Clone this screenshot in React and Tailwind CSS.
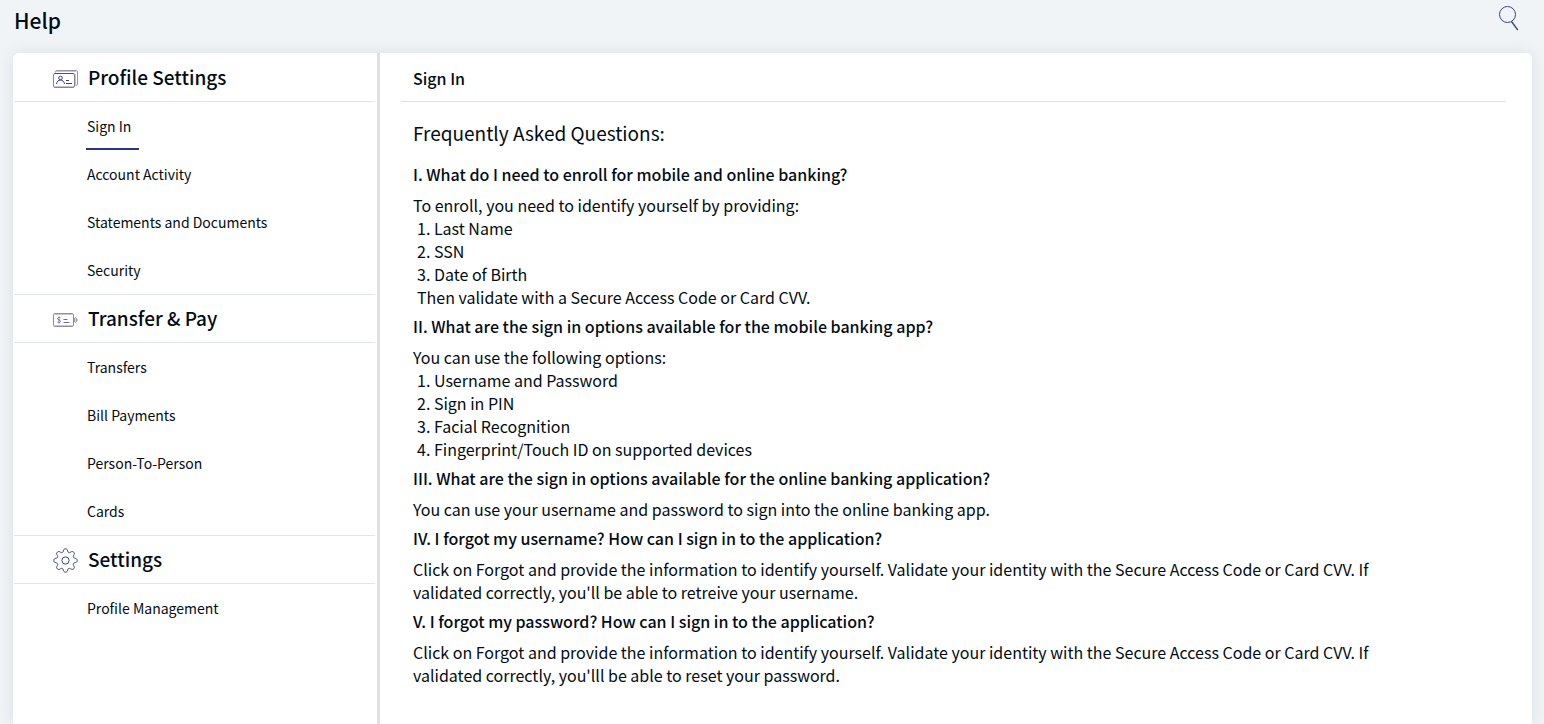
import clsx from 'clsx'

function ProfileIcon() {
  return (
    <svg width="25" height="18" viewBox="0 0 25 18" fill="none" aria-hidden="true">
      <path d="M2.500 2.500V2a1.500 1.500 0 0 1 1.500-1.500H23A1.500 1.500 0 0 1 24.500 2V14A1.500 1.500 0 0 1 23 15.500" stroke="#9897ad" />
      <path d="M3 1.500H23M1.500 16.500H21M22.500 4V16" stroke="#c6c5ce" />
      <rect x="0.500" y="3.500" width="21" height="14" rx="1.500" stroke="#8580a8" />
      <path d="M1.500 3.500H20.500" stroke="#4a4d86" />
      <circle cx="7.500" cy="8" r="1.800" stroke="#3b4480" />
      <path d="M3.500 14c.4-2.600 1.900-3.900 4-3.900s3.600 1.300 4 3.900" stroke="#3b4480" />
      <path d="M13 10.500h3M13 13.500h6" stroke="#3b4480" />
    </svg>
  )
}

function TransferIcon() {
  return (
    <svg width="25" height="14" viewBox="0 0 25 14" fill="none" aria-hidden="true">
      <rect x="0.500" y="0.500" width="20" height="13" rx="1.500" stroke="#8f8dab" />
      <path d="M1.500 1.500H20M1.500 12.500H20" stroke="#c6c5ce" />
      <path d="M7.500 4.800C6.500 4 4.500 4.300 4.500 5.600c0 1.600 3 1 3 2.700 0 1.400-2 1.700-3.100.8M6 3.500v7" stroke="#6d6f9c" strokeWidth="0.9" />
      <path d="M10.500 6.500h4M10.500 9.500h6" stroke="#6d6f9c" />
      <path d="M20.500 4.500l1.700 2.500-1.700 2.500M22.500 4.500L24.200 7l-1.700 2.500" stroke="#6d6f9c" />
    </svg>
  )
}

function GearIcon() {
  return (
    <svg width="25" height="25" viewBox="0 0 25 25" fill="none" stroke="#3b4480" aria-hidden="true">
      <circle cx="12.500" cy="12.500" r="3.600" />
      <path strokeLinejoin="round" d="M10.3 3.200C10.500 1.600 11.200.8 12.500.8s2 .8 2.200 2.400c.2 1.300 1.600 1.900 2.700 1.100 1.300-1 2.400-1 3.300-.1s.9 2-.1 3.300c-.8 1.100-.2 2.500 1.100 2.700 1.700.2 2.500 1 2.500 2.300s-.8 2.100-2.500 2.300c-1.300.2-1.900 1.600-1.100 2.700 1 1.300 1 2.400.1 3.300s-2 .9-3.300-.1c-1.100-.8-2.500-.2-2.700 1.100-.2 1.600-.9 2.400-2.200 2.400s-2-.8-2.200-2.400c-.2-1.300-1.600-1.900-2.700-1.100-1.300 1-2.400 1-3.300.1s-.9-2 .1-3.300c.8-1.100.2-2.500-1.100-2.700-1.700-.2-2.500-1-2.500-2.300s.8-2.100 2.500-2.300c1.300-.2 1.900-1.600 1.100-2.700-1-1.300-1-2.400-.1-3.300s2-.9 3.300.1c1.100.8 2.500.2 2.700-1.100Z" />
    </svg>
  )
}

function SearchIcon() {
  return (
    <svg width="20" height="26" viewBox="0 0 20 26" fill="none" stroke="#3b4480" aria-hidden="true">
      <circle cx="8.500" cy="8.500" r="8" />
      <path d="M12.500 15.500L18.800 24" strokeWidth="1.300" />
    </svg>
  )
}

const MENU = [
  { title: 'Profile Settings', icon: ProfileIcon, items: ['Sign In', 'Account Activity', 'Statements and Documents', 'Security'] },
  { title: 'Transfer & Pay', icon: TransferIcon, items: ['Transfers', 'Bill Payments', 'Person-To-Person', 'Cards'] },
  { title: 'Settings', icon: GearIcon, items: ['Profile Management'] },
]

const FAQ = [
  {
    q: 'I. What do I need to enroll for mobile and online banking?',
    a: 'To enroll, you need to identify yourself by providing:',
    list: ['1. Last Name', '2. SSN', '3. Date of Birth', 'Then validate with a Secure Access Code or Card CVV.'],
  },
  {
    q: 'II. What are the sign in options available for the mobile banking app?',
    a: 'You can use the following options:',
    list: ['1. Username and Password', '2. Sign in PIN', '3. Facial Recognition', '4. Fingerprint/Touch ID on supported devices'],
  },
  {
    q: 'III. What are the sign in options available for the online banking application?',
    a: 'You can use your username and password to sign into the online banking app.',
  },
  {
    q: 'IV. I forgot my username? How can I sign in to the application?',
    a: "Click on Forgot and provide the information to identify yourself. Validate your identity with the Secure Access Code or Card CVV. If validated correctly, you'll be able to retreive your username.",
  },
  {
    q: 'V. I forgot my password? How can I sign in to the application?',
    a: "Click on Forgot and provide the information to identify yourself. Validate your identity with the Secure Access Code or Card CVV. If validated correctly, you'lll be able to reset your password.",
  },
]

function Sidebar({ active }) {
  return (
    <nav className="w-[367px] shrink-0 border-r-3 border-[#e0e0e0] pr-0.5 pl-px">
      {MENU.map(({ title, icon: Icon, items }, i) => (
        <section key={title}>
          <h2 className={clsx('flex h-[49px] items-center gap-2.5 border-y border-[#e1e5ee] pl-[39px] text-[19px] leading-6 font-medium', i === 0 && 'border-t-transparent')}>
            <span className="pt-0.5"><Icon /></span>
            <span className="pb-0.5">{title}</span>
          </h2>
          <ul className="pl-[72px]">
            {items.map((item) => (
              <li key={item} className="flex h-12">
                <a
                  href="#"
                  aria-current={item === active ? 'page' : undefined}
                  className={clsx('flex items-center border-b-2 pt-0.5 pr-2 pl-px text-[14px]', item === active ? 'border-[#2b3480]' : 'border-transparent')}
                >
                  {item}
                </a>
              </li>
            ))}
          </ul>
        </section>
      ))}
    </nav>
  )
}

export default function App() {
  return (
    <div className={'flex min-h-screen flex-col bg-[#f0f4f7] text-[#030c14] font-[family-name:"Noto_Sans_CJK_SC","Noto_Sans",sans-serif]'}>
      <header className="flex h-[53px] items-start justify-between px-3.5">
        <h1 className="pt-2 text-[21px] leading-6 font-medium">Help</h1>
        <button type="button" aria-label="Search" className="mt-1.5 mr-[11px]">
          <SearchIcon />
        </button>
      </header>

      <div className="mr-3 ml-[13px] flex grow rounded-t-md bg-white shadow-[0_0_16px_rgba(30,50,70,0.1)]">
        <Sidebar active="Sign In" />
        <main className="grow pr-[26px] pb-8 pl-[21px]">
          <h2 className="h-[49px] border-b border-[#e0e0e0] pt-[13px] pl-3 text-[16px] leading-6 font-medium">Sign In</h2>
          <div className="pt-[19px] pr-[100px] pl-3 text-[16px] leading-[23px]">
            <h3 className="mb-[18px] text-[19px] leading-6 font-normal">Frequently Asked Questions:</h3>
            {FAQ.map(({ q, a, list }) => (
              <section key={q} className="mb-1.5">
                <h4 className="mb-2 font-medium">{q}</h4>
                <p>{a}</p>
                {list && (
                  <ul className="pl-1">
                    {list.map((line) => <li key={line}>{line}</li>)}
                  </ul>
                )}
              </section>
            ))}
          </div>
        </main>
      </div>
    </div>
  )
}
